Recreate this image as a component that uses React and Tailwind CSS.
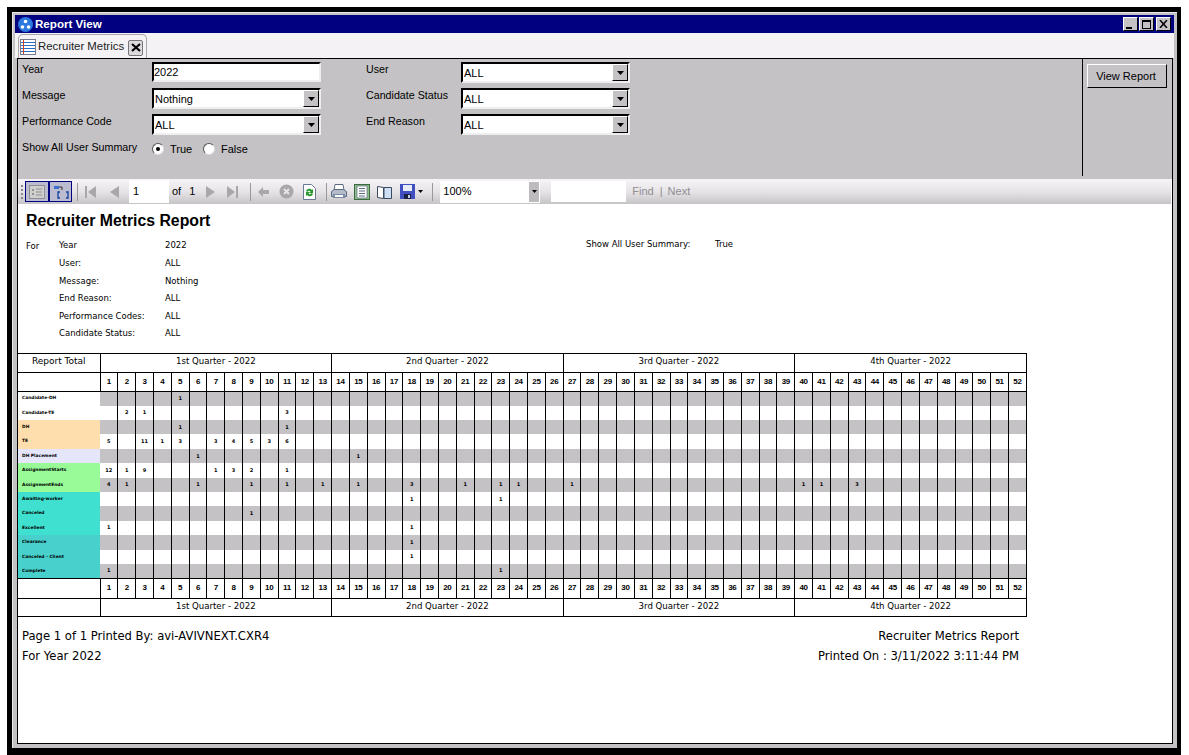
import React from "react";

const ROWS = [
  { name: "Candidate-DH", bg: "bg-white", vals: { 5: 1 } },
  { name: "Candidate-TE", bg: "bg-white", vals: { 2: 2, 3: 1, 11: 3 } },
  { name: "DH", bg: "bg-[#ffdead]", vals: { 5: 1, 11: 1 } },
  { name: "TE", bg: "bg-[#ffdead]", vals: { 1: 5, 3: 11, 4: 1, 5: 3, 7: 3, 8: 4, 9: 5, 10: 3, 11: 6 } },
  { name: "DH Placement", bg: "bg-[#e6e6fa]", vals: { 6: 1, 15: 1 } },
  { name: "AssignmentStarts", bg: "bg-[#98fb98]", vals: { 1: 12, 2: 1, 3: 9, 7: 1, 8: 3, 9: 2, 11: 1 } },
  { name: "AssignmentEnds", bg: "bg-[#98fb98]", vals: { 1: 4, 2: 1, 6: 1, 9: 1, 11: 1, 13: 1, 15: 1, 18: 3, 21: 1, 23: 1, 24: 1, 27: 1, 40: 1, 41: 1, 43: 3 } },
  { name: "Awaiting-worker", bg: "bg-[#40e0d0]", vals: { 18: 1, 23: 1 } },
  { name: "Canceled", bg: "bg-[#40e0d0]", vals: { 9: 1 } },
  { name: "Excellent", bg: "bg-[#40e0d0]", vals: { 1: 1, 18: 1 } },
  { name: "Clearance", bg: "bg-[#48d1cc]", vals: { 18: 1 } },
  { name: "Canceled - Client", bg: "bg-[#48d1cc]", vals: { 18: 1 } },
  { name: "Complete", bg: "bg-[#48d1cc]", vals: { 1: 1, 23: 1 } },
];

const WEEKS = Array.from({ length: 52 }, (_, i) => i + 1);
const QUARTERS = ["1st Quarter - 2022", "2nd Quarter - 2022", "3rd Quarter - 2022", "4th Quarter - 2022"];

const Combo = ({ value }) => (
  <div className="w-[169px] h-[21px] flex items-center bg-white border-t-2 border-l-2 border-black border-b-2 border-r-2 border-b-[#eeeeee] border-r-[#eeeeee] pl-[1px] text-[11px]">
    <span className="flex-1 pt-[2px]">{value}</span>
    <div className="w-[16px] h-[17px] flex items-center justify-center bg-[#c4c2c5] border border-t-white border-l-white border-b-black border-r-black">
      <svg width="7" height="4"><path d="M0 0h7L3.5 4z" fill="#000" /></svg>
    </div>
  </div>
);

const Radio = ({ on }) => (
  <div className="w-[12px] h-[12px] rounded-full bg-white border border-t-[#555] border-l-[#555] border-b-[#ddd] border-r-[#ddd] flex items-center justify-center">
    {on && <div className="w-[4px] h-[4px] rounded-full bg-black" />}
  </div>
);

const WinBtn = ({ children }) => (
  <div className="w-[15px] h-[14px] bg-[#c4c2c5] border border-t-white border-l-white border-b-black border-r-black flex items-center justify-center">
    {children}
  </div>
);

const Sep = ({ ml, mr }) => <div className={`w-[1px] h-[18px] bg-[#9a989b] ${ml} ${mr}`} />;

const Report = () => (
  <div className="flex-1 bg-white text-black">
    <h1 className="mt-[8px] ml-[8px] h-[18px] leading-[18px] text-[15.8px] font-bold">Recruiter Metrics Report</h1>

    {/* filter summary */}
    <div className="mt-[7px] mb-[10.2px] flex font-['DejaVu_Sans',sans-serif] text-[8.5px]">
      <div className="w-[41px] pl-[8px] leading-[18px]">For</div>
      <div className="w-[527px]">
        {[
          ["Year", "2022"],
          ["User:", "ALL"],
          ["Message:", "Nothing"],
          ["End Reason:", "ALL"],
          ["Performance Codes:", "ALL"],
          ["Candidate Status:", "ALL"],
        ].map(([k, v]) => (
          <div key={k} className="flex h-[17.6px] items-center">
            <span className="w-[106px] whitespace-nowrap">{k}</span>
            <span>{v}</span>
          </div>
        ))}
      </div>
      <div className="flex h-[14px] items-center">
        <span className="w-[129px]">Show All User Summary:</span>
        <span>True</span>
      </div>
    </div>

    <table className="table-fixed border-collapse w-[1009px] font-['DejaVu_Sans',sans-serif]">
      <colgroup>
        <col className="w-[82px]" />
        {WEEKS.map((w) => (
          <col key={w} />
        ))}
      </colgroup>
      <thead>
        <tr className="h-[19px] text-[9px] font-normal">
          <th className="border-y border-r border-black font-normal p-0 pb-[2px]">Report Total</th>
          {QUARTERS.map((q) => (
            <th key={q} colSpan={13} className="border border-black font-normal p-0 pb-[2px] text-[8.6px]">{q}</th>
          ))}
        </tr>
        <tr className="h-[19px]">
          <th className="border-y border-r border-black p-0" />
          {WEEKS.map((w) => (
            <th key={w} className="border border-black p-0 font-['Liberation_Sans',sans-serif] text-[8px] tracking-[-0.3px] font-bold">{w}</th>
          ))}
        </tr>
      </thead>
      <tbody>
        {ROWS.map((r, i) => (
          <tr key={r.name} className="h-[14.4px]">
            <td className={`${r.bg} p-0 pl-[4px] text-[4.4px] font-bold leading-none whitespace-nowrap`}>{r.name}</td>
            {WEEKS.map((w, j) => (
              <td
                key={w}
                className={`${i % 2 === 0 ? "bg-[#c4c2c5]" : "bg-white"} ${j === 0 ? "" : "border-l"} border-r border-black p-0 text-center text-[5px] font-bold leading-none`}
              >
                {r.vals[w]}
              </td>
            ))}
          </tr>
        ))}
      </tbody>
      <tfoot>
        <tr className="h-[20px]">
          <td className="border-y border-r border-black p-0" />
          {WEEKS.map((w) => (
            <td key={w} className="border border-black p-0 text-center font-['Liberation_Sans',sans-serif] text-[8px] tracking-[-0.3px] font-bold">{w}</td>
          ))}
        </tr>
        <tr className="h-[18px] text-[8.6px]">
          <td className="border-y border-r border-black p-0" />
          {QUARTERS.map((q) => (
            <td key={q} colSpan={13} className="border border-black p-0 pb-[2px] text-center">{q}</td>
          ))}
        </tr>
      </tfoot>
    </table>

    {/* page footer */}
    <div className="mt-[9px] ml-[4px] mr-[153px] flex justify-between font-['DejaVu_Sans',sans-serif] text-[11.6px] leading-[20px]">
      <div>
        <div>Page 1 of 1 Printed By: avi-AVIVNEXT.CXR4</div>
        <div>For Year 2022</div>
      </div>
      <div className="text-right">
        <div>Recruiter Metrics Report</div>
        <div>Printed On : 3/11/2022 3:11:44 PM</div>
      </div>
    </div>
  </div>
);

const Toolbar = () => (
  <div className="h-[25px] mr-[1px] flex items-center bg-linear-to-b from-[#f6f4f7] via-[#e6e4e7] to-[#c6c4c7] text-[11px]">
    {/* grip */}
    <div className="ml-[3px] w-[2px] h-[14px] border-l-2 border-dotted border-[#8a888b]" />

    <div className="ml-[2px] w-[24px] h-[21px] bg-[#bcbcd0] border border-[#000080] flex items-center justify-center">
      <svg width="16" height="14" viewBox="0 0 16 14">
        <rect x="0.5" y="0.5" width="15" height="13" fill="#cfcfcf" stroke="#8f8f8f" />
        <path d="M3 4h2v2H3zM3 8h2v2H3z" fill="#8f8f8f" />
        <path d="M7 4h6M7 7h6M7 10h6" stroke="#8f8f8f" />
      </svg>
    </div>
    <div className="w-[23px] h-[21px] bg-[#bcbcd0] border border-[#000080] flex items-center justify-center">
      <svg width="16" height="15" viewBox="0 0 16 15">
        <path d="M1 2h5v3H1z" fill="#3a6fd0" />
        <path d="M6 3h3v3" stroke="#333" fill="none" />
        <path d="M7 8H5v6h2M13 8h2v6h-2" stroke="#1040a0" strokeWidth="1.3" fill="none" />
      </svg>
    </div>

    <Sep ml="ml-[5px]" mr="mr-[7px]" />
    <svg width="11" height="12" viewBox="0 0 11 12" fill="#a9a7aa"><path d="M0 0h2v12H0zM11 0v12L3 6z" /></svg>
    <svg className="ml-[14px]" width="9" height="12" viewBox="0 0 9 12" fill="#a9a7aa"><path d="M9 0v12L0 6z" /></svg>
    <div className="ml-[10px] w-[40px] h-[23px] bg-white pl-[4px] leading-[23px]">1</div>
    <span className="ml-[3px]">of</span>
    <span className="ml-[8px]">1</span>
    <svg className="ml-[11px]" width="9" height="12" viewBox="0 0 9 12" fill="#a9a7aa"><path d="M0 0v12l9-6z" /></svg>
    <svg className="ml-[12px]" width="11" height="12" viewBox="0 0 11 12" fill="#a9a7aa"><path d="M0 0v12l8-6zM9 0h2v12H9z" /></svg>
    <Sep ml="ml-[12px]" mr="mr-[7px]" />
    <svg width="11" height="10" viewBox="0 0 11 10" fill="#a9a7aa"><path d="M5 0v3h6v4H5v3L0 5z" /></svg>
    <svg className="ml-[10px]" width="15" height="15" viewBox="0 0 15 15">
      <circle cx="7.5" cy="7.5" r="7" fill="#a9a7aa" />
      <path d="M5 5l5 5M10 5l-5 5" stroke="#e6e4e7" strokeWidth="2" />
    </svg>
    <svg className="ml-[9px]" width="13" height="16" viewBox="0 0 13 16">
      <path d="M.5.5h8l4 4v11H.5z" fill="#fff" stroke="#6a7a90" />
      <path d="M3 7a3.5 3.5 0 0 1 6-1l1-1v4H6l1.500-1.500A2 2 0 0 0 4.500 8z" fill="#2a9a30" />
      <path d="M10 10a3.500 3.500 0 0 1-6 1l-1 1V8h4L5.500 9.500A2 2 0 0 0 8.500 9z" fill="#2a9a30" />
    </svg>
    <Sep ml="ml-[10px]" mr="mr-[4px]" />
    <svg width="16" height="15" viewBox="0 0 16 15">
      <path d="M4 .5h8l1 6H3z" fill="#fff" stroke="#5a6a80" />
      <path d="M.5 7.500l3-2h9l3 2v5h-15z" fill="#b4bccb" stroke="#5a6a80" />
      <path d="M2 10h12v4H2z" fill="#7a8aa0" />
      <path d="M4 11h8v2H4z" fill="#fff" />
    </svg>
    <svg className="ml-[7px]" width="16" height="16" viewBox="0 0 16 16">
      <rect x="0.500" y="0.500" width="15" height="15" fill="#8fbf8f" stroke="#3c6a3c" />
      <rect x="3" y="2" width="10" height="12" fill="#fff" stroke="#5a6a80" strokeWidth="0.7" />
      <path d="M5 4.500h6M5 7h6M5 9.500h6M5 12h6" stroke="#5a6a80" />
    </svg>
    <svg className="ml-[7px]" width="15" height="14" viewBox="0 0 15 14">
      <path d="M.5 1.500l6 1v11l-6-1z" fill="#fff" stroke="#3a4a60" />
      <path d="M7 2.500h7.500v11H7z" fill="#cfe0f5" stroke="#3a4a60" />
    </svg>
    <svg className="ml-[8px]" width="15" height="15" viewBox="0 0 15 15">
      <path d="M0 0h15v15H0z" fill="#3f4fc0" />
      <path d="M3 1h9v6H3z" fill="#e8ecf8" />
      <path d="M4 10h7v5H4z" fill="#1a2040" />
      <path d="M8 11h2v3H8z" fill="#c8d0f0" />
    </svg>
    <svg className="ml-[3px]" width="5" height="3"><path d="M0 0h5L2.500 3z" fill="#000" /></svg>
    <Sep ml="ml-[9px]" mr="mr-[7px]" />
    <div className="w-[100px] h-[22px] bg-white flex items-center pl-[3px]">
      <span className="flex-1">100%</span>
      <div className="w-[10px] mr-[1px] h-[20px] bg-[#bdbbbe] flex items-center justify-center">
        <svg width="5" height="3"><path d="M0 0h5L2.500 3z" fill="#000" /></svg>
      </div>
    </div>
    <div className="ml-[11px] w-[75px] h-[21px] bg-white" />
    <span className="ml-[6px] text-[#8f8d90]">Find</span>
    <span className="ml-[6px] text-[#8f8d90]">|</span>
    <span className="ml-[5px] text-[#8f8d90]">Next</span>
  </div>
);

const Params = () => (
  <div className="h-[120px] flex bg-[#c4c2c5] text-[10.7px] text-black">
    <div className="w-[1064px] pl-[4px] pt-[3px] flex">
      <div className="w-[348px]">
        <div className="flex h-[26px]">
          <div className="w-[130px] leading-[14px]">Year</div>
          <div className="w-[169px] h-[20px] bg-white border-t-2 border-l-2 border-black border-b-2 border-r-2 border-b-[#eeeeee] border-r-[#eeeeee] text-[11px] leading-[17px]">2022</div>
        </div>
        <div className="flex h-[26px]">
          <div className="w-[130px] leading-[14px]">Message</div>
          <Combo value="Nothing" />
        </div>
        <div className="flex h-[26px]">
          <div className="w-[130px] leading-[14px]">Performance Code</div>
          <Combo value="ALL" />
        </div>
        <div className="flex h-[26px]">
          <div className="w-[130px] leading-[14px]">Show All User Summary</div>
          <div className="flex items-center h-[18px] text-[11px]">
            <Radio on />
            <span className="ml-[6px] w-[33px]">True</span>
            <Radio />
            <span className="ml-[6px]">False</span>
          </div>
        </div>
      </div>
      <div className="w-[264px] ml-[-4px]">
        {[
          ["User", "ALL"],
          ["Candidate Status", "ALL"],
          ["End Reason", "ALL"],
        ].map(([k, v]) => (
          <div key={k} className="flex h-[26px]">
            <div className="w-[95px] leading-[14px]">{k}</div>
            <Combo value={v} />
          </div>
        ))}
      </div>
    </div>
    <div className="w-[89px] h-[117px] border-l border-black pl-[4px] pt-[5px]">
      <button className="w-[80px] h-[24px] bg-[#c4c2c5] border border-t-white border-l-white border-b-black border-r-black text-[11px] pr-[2px]">
        View Report
      </button>
    </div>
  </div>
);

export default function App() {
  return (
    <div className="w-[1189px] h-[755px] bg-white pt-[7px] pl-[7px] font-['Liberation_Sans',sans-serif]">
      <div className="w-[1174px] h-[748px] bg-black pt-[5px] pl-[5px] pr-[4px] pb-[7px]">
        <div className="h-full bg-[#c4c2c5] border-t border-l border-t-[#e8e8e8] border-l-[#e8e8e8] pt-[2px] pl-[2px] pr-[3px] pb-[4px] flex flex-col">
          {/* title bar */}
          <div className="h-[18px] bg-[#000080] flex items-center pl-[3px] pr-[3px] shrink-0">
            <svg width="15" height="15" viewBox="0 0 15 15">
              <circle cx="7.500" cy="7.500" r="7.500" fill="#2a78e0" />
              <circle cx="7.500" cy="4.500" r="1.800" fill="#fff" />
              <circle cx="4.500" cy="10" r="1.800" fill="#fff" />
              <circle cx="10.500" cy="10" r="1.800" fill="#fff" />
            </svg>
            <span className="ml-[2px] flex-1 text-white font-bold text-[11.6px]">Report View</span>
            <WinBtn><div className="w-[6px] h-[2px] bg-black mt-[7px] mr-[3px]" /></WinBtn>
            <div className="ml-[1px]"><WinBtn><div className="w-[9px] h-[9px] border border-t-2 border-black" /></WinBtn></div>
            <div className="ml-[2px]">
              <WinBtn>
                <svg width="9" height="8"><path d="M1 0l7 8M8 0L1 8" stroke="#000" strokeWidth="1.500" /></svg>
              </WinBtn>
            </div>
          </div>

          {/* tab strip */}
          <div className="h-[25px] bg-[#f4f2f5] pl-[3px] pt-[1px] shrink-0 flex">
            <div className="w-[129px] h-[24px] bg-[#f4f2f5] border border-b-0 border-[#a8a6a9] rounded-t-[5px] flex items-center pl-[1px] text-[11.4px] text-[#222] whitespace-nowrap">
              <svg className="shrink-0" width="16" height="16" viewBox="0 0 16 16">
                <rect x="0.500" y="0.500" width="15" height="15" fill="#fff" stroke="#7a7a90" />
                <path d="M1 3.500h14M1 6.500h14M1 9.500h14M1 12.500h14" stroke="#2b6bc4" />
                <path d="M3.500 1v14" stroke="#d04020" />
              </svg>
              <span className="ml-[2px] w-[86px]">Recruiter Metrics</span>
              <div className="ml-[4px] mt-[2px] w-[15px] h-[16px] shrink-0 rounded-[2px] bg-[#dcdadd] border border-[#777] flex items-center justify-center">
                <svg width="10" height="9"><path d="M1 1l8 7M9 1L1 8" stroke="#000" strokeWidth="2.200" /></svg>
              </div>
            </div>
          </div>

          {/* report panel */}
          <div className="flex-1 ml-[2px] mr-[1px] border border-black flex flex-col min-h-0 bg-white">
            <Params />
            <Toolbar />
            <Report />
          </div>
        </div>
      </div>
    </div>
  );
}
